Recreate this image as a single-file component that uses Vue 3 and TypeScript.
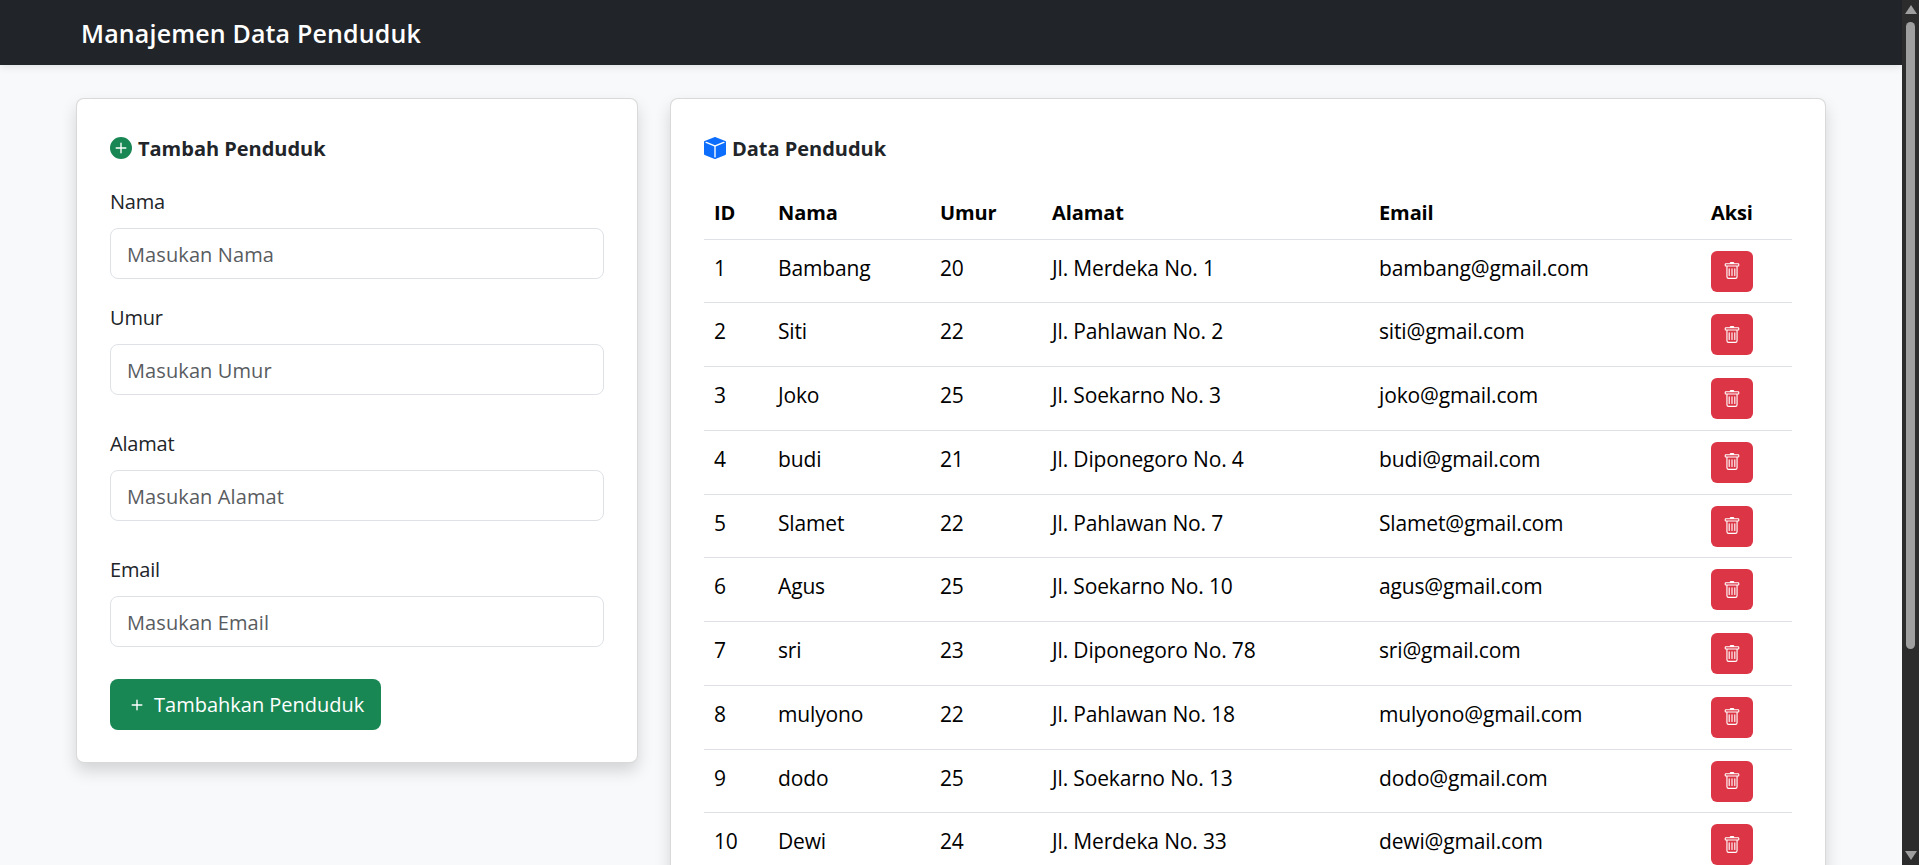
<script setup lang="ts">
import { ref } from 'vue'

interface Penduduk {
  id: number
  nama: string
  umur: number
  alamat: string
  email: string
}

const fields = [
  { label: 'Nama', placeholder: 'Masukan Nama', cls: 'first' },
  { label: 'Umur', placeholder: 'Masukan Umur', cls: 'second' },
  { label: 'Alamat', placeholder: 'Masukan Alamat', cls: 'third' },
  { label: 'Email', placeholder: 'Masukan Email', cls: 'third' },
]

const penduduk = ref<Penduduk[]>([
  { id: 1, nama: 'Bambang', umur: 20, alamat: 'Jl. Merdeka No. 1', email: 'bambang@gmail.com' },
  { id: 2, nama: 'Siti', umur: 22, alamat: 'Jl. Pahlawan No. 2', email: 'siti@gmail.com' },
  { id: 3, nama: 'Joko', umur: 25, alamat: 'Jl. Soekarno No. 3', email: 'joko@gmail.com' },
  { id: 4, nama: 'budi', umur: 21, alamat: 'Jl. Diponegoro No. 4', email: 'budi@gmail.com' },
  { id: 5, nama: 'Slamet', umur: 22, alamat: 'Jl. Pahlawan No. 7', email: 'Slamet@gmail.com' },
  { id: 6, nama: 'Agus', umur: 25, alamat: 'Jl. Soekarno No. 10', email: 'agus@gmail.com' },
  { id: 7, nama: 'sri', umur: 23, alamat: 'Jl. Diponegoro No. 78', email: 'sri@gmail.com' },
  { id: 8, nama: 'mulyono', umur: 22, alamat: 'Jl. Pahlawan No. 18', email: 'mulyono@gmail.com' },
  { id: 9, nama: 'dodo', umur: 25, alamat: 'Jl. Soekarno No. 13', email: 'dodo@gmail.com' },
  { id: 10, nama: 'Dewi', umur: 24, alamat: 'Jl. Merdeka No. 33', email: 'dewi@gmail.com' },
])
</script>

<template>
  <div class="shell">
    <div class="page">
      <nav class="navbar">
        <span class="brand">Manajemen Data Penduduk</span>
      </nav>
      <main class="content">
        <section class="card form-card">
          <h2 class="title">
            <svg class="title-icon green" viewBox="0 0 16 16" fill="currentColor">
              <path d="M16 8A8 8 0 1 1 0 8a8 8 0 0 1 16 0M8.5 4.5a.5.5 0 0 0-1 0v3h-3a.5.5 0 0 0 0 1h3v3a.5.5 0 0 0 1 0v-3h3a.5.5 0 0 0 0-1h-3z" />
            </svg>
            Tambah Penduduk
          </h2>
          <form @submit.prevent>
            <div v-for="f in fields" :key="f.label" class="field" :class="f.cls">
              <label class="label">{{ f.label }}</label>
              <input class="input" type="text" :placeholder="f.placeholder" />
            </div>
            <button class="btn-add" type="submit">
              <svg class="plus" viewBox="0 0 16 16" fill="currentColor">
                <path d="M8 4a.5.5 0 0 1 .5.5v3h3a.5.5 0 0 1 0 1h-3v3a.5.5 0 0 1-1 0v-3h-3a.5.5 0 0 1 0-1h3v-3A.5.5 0 0 1 8 4" />
              </svg>
              Tambahkan Penduduk
            </button>
          </form>
        </section>

        <section class="card table-card">
          <h2 class="title">
            <svg class="title-icon blue" viewBox="0 0 16 16" fill="currentColor">
              <path d="M15.528 2.973a.75.75 0 0 1 .472.696v8.662a.75.75 0 0 1-.472.696l-7.25 2.9a.75.75 0 0 1-.557 0l-7.25-2.9A.75.75 0 0 1 0 12.331V3.669a.75.75 0 0 1 .471-.696L7.443.184l.004-.001.274-.11a.75.75 0 0 1 .558 0l.274.11.004.001zm-1.374.527L8 5.962 1.846 3.5 1 3.839v.4l6.5 2.6v7.922l.5.2.5-.2V6.84l6.5-2.6v-.4l-.846-.339Z" />
            </svg>
            Data Penduduk
          </h2>
          <table class="table">
            <colgroup>
              <col style="width: 63px" />
              <col style="width: 162px" />
              <col style="width: 112px" />
              <col style="width: 327px" />
              <col style="width: 332px" />
              <col style="width: 92px" />
            </colgroup>
            <thead>
              <tr>
                <th>ID</th>
                <th>Nama</th>
                <th>Umur</th>
                <th>Alamat</th>
                <th>Email</th>
                <th>Aksi</th>
              </tr>
            </thead>
            <tbody>
              <tr v-for="p in penduduk" :key="p.id">
                <td>{{ p.id }}</td>
                <td>{{ p.nama }}</td>
                <td>{{ p.umur }}</td>
                <td>{{ p.alamat }}</td>
                <td>{{ p.email }}</td>
                <td class="aksi">
                  <button class="btn-del" type="button">
                    <svg viewBox="0 0 16 16" fill="currentColor">
                      <path d="M5.5 5.5A.5.5 0 0 1 6 6v6a.5.5 0 0 1-1 0V6a.5.5 0 0 1 .5-.5m2.5 0a.5.5 0 0 1 .5.5v6a.5.5 0 0 1-1 0V6a.5.5 0 0 1 .5-.5m3 .5a.5.5 0 0 0-1 0v6a.5.5 0 0 0 1 0z" />
                      <path d="M14.5 3a1 1 0 0 1-1 1H13v9a2 2 0 0 1-2 2H5a2 2 0 0 1-2-2V4h-.5a1 1 0 0 1-1-1V2a1 1 0 0 1 1-1H6a1 1 0 0 1 1-1h2a1 1 0 0 1 1 1h3.5a1 1 0 0 1 1 1zM4.118 4 4 4.059V13a1 1 0 0 0 1 1h6a1 1 0 0 0 1-1V4.059L11.882 4zM2.5 3h11V2h-11z" />
                    </svg>
                  </button>
                </td>
              </tr>
            </tbody>
          </table>
        </section>
      </main>
    </div>
    <div class="scrollbar">
      <span class="arrow up"></span>
      <div class="track"><div class="thumb"></div></div>
      <span class="arrow down"></span>
    </div>
  </div>
</template>

<style>
html,
body {
  margin: 0;
  height: 100%;
  overflow: hidden;
}
</style>

<style scoped>
.shell {
  display: flex;
  height: 865px;
  overflow: hidden;
  font-family: "Open Sans", "Noto Sans", sans-serif;
  font-size: 20px;
  color: #212529;
}
.page {
  flex: 1;
  min-width: 0;
  background: #f8f9fa;
  overflow: hidden;
}
.navbar {
  height: 65px;
  box-sizing: border-box;
  padding-left: 81px;
  display: flex;
  align-items: center;
  background: #212529;
  box-shadow: 0 2px 8px rgba(0, 0, 0, 0.1);
}
.brand {
  color: #fff;
  font-size: 25px;
  font-weight: 600;
  letter-spacing: 0.15px;
}
.content {
  display: grid;
  grid-template-columns: 562px 1156px;
  column-gap: 32px;
  align-items: start;
  padding: 33px 76px 0;
}
.card {
  box-sizing: border-box;
  background: #fff;
  border: 1px solid rgba(0, 0, 0, 0.15);
  border-radius: 8px;
  box-shadow: 0 8px 16px rgba(0, 0, 0, 0.15);
  padding: 33px 33px 32px;
}
.title {
  display: flex;
  align-items: center;
  gap: 6px;
  margin: 0;
  height: 32px;
  font-size: 20px;
  font-weight: 700;
  letter-spacing: -0.02px;
}
.title-icon {
  width: 22px;
  height: 22px;
  flex: none;
}
.green {
  color: #198754;
}
.blue {
  color: #0d6efd;
}
.field {
  display: flex;
  flex-direction: column;
}
.field.first {
  margin-top: 24px;
}
.field.second {
  margin-top: 25px;
}
.field.third {
  margin-top: 35px;
}
.label {
  line-height: 28px;
  margin-bottom: 12px;
  font-size: 20px;
  letter-spacing: -0.2px;
}
.input {
  box-sizing: border-box;
  width: 100%;
  height: 51px;
  padding: 2px 16px 0;
  border: 1px solid #dee2e6;
  border-radius: 8px;
  background: #fff;
  font: inherit;
  letter-spacing: 0.1px;
  color: #212529;
  outline: none;
}
.input::placeholder {
  color: #595c5f;
  opacity: 1;
}
.btn-add {
  display: flex;
  align-items: center;
  gap: 6px;
  height: 51px;
  width: 271px;
  margin-top: 32px;
  padding: 0 16px;
  border: none;
  border-radius: 8px;
  background: #198754;
  color: #fff;
  font: inherit;
  white-space: nowrap;
}
.plus {
  width: 22px;
  height: 22px;
  flex: none;
}
.table {
  width: 1088px;
  margin-top: 23px;
  border-collapse: collapse;
  table-layout: fixed;
  color: #000;
}
.table th {
  box-sizing: border-box;
  height: 52px;
  padding: 0 11px;
  text-align: left;
  font-weight: 700;
  letter-spacing: -0.1px;
  border-bottom: 1px solid #dee2e6;
}
.table td {
  box-sizing: border-box;
  height: 63.75px;
  padding: 14px 11px 0;
  vertical-align: top;
  font-size: 21px;
  line-height: 28px;
  letter-spacing: -0.15px;
  border-bottom: 1px solid #dee2e6;
  white-space: nowrap;
}
.table th:first-child,
.table td:first-child {
  padding-left: 10px;
}
.table td.aksi {
  padding-top: 11px;
}
.btn-del {
  display: flex;
  align-items: center;
  justify-content: center;
  width: 42px;
  height: 41px;
  padding: 0;
  border: none;
  border-radius: 6px;
  background: #dc3545;
  color: #fff;
}
.btn-del svg {
  width: 18px;
  height: 18px;
}
.scrollbar {
  flex: none;
  width: 17px;
  height: 100%;
  display: flex;
  flex-direction: column;
  align-items: center;
  background: #2c2c2c;
}
.track {
  flex: 1;
  width: 100%;
  padding-top: 4px;
}
.thumb {
  width: 9px;
  height: 627px;
  margin: 0 auto;
  border-radius: 5px;
  background: #9f9f9f;
}
.arrow {
  flex: none;
  width: 0;
  height: 0;
  border-left: 6px solid transparent;
  border-right: 6px solid transparent;
}
.arrow.up {
  margin: 5px 0 4px;
  border-bottom: 9px solid #9f9f9f;
}
.arrow.down {
  margin: 4px 0 5px;
  border-top: 9px solid #9f9f9f;
}
</style>
